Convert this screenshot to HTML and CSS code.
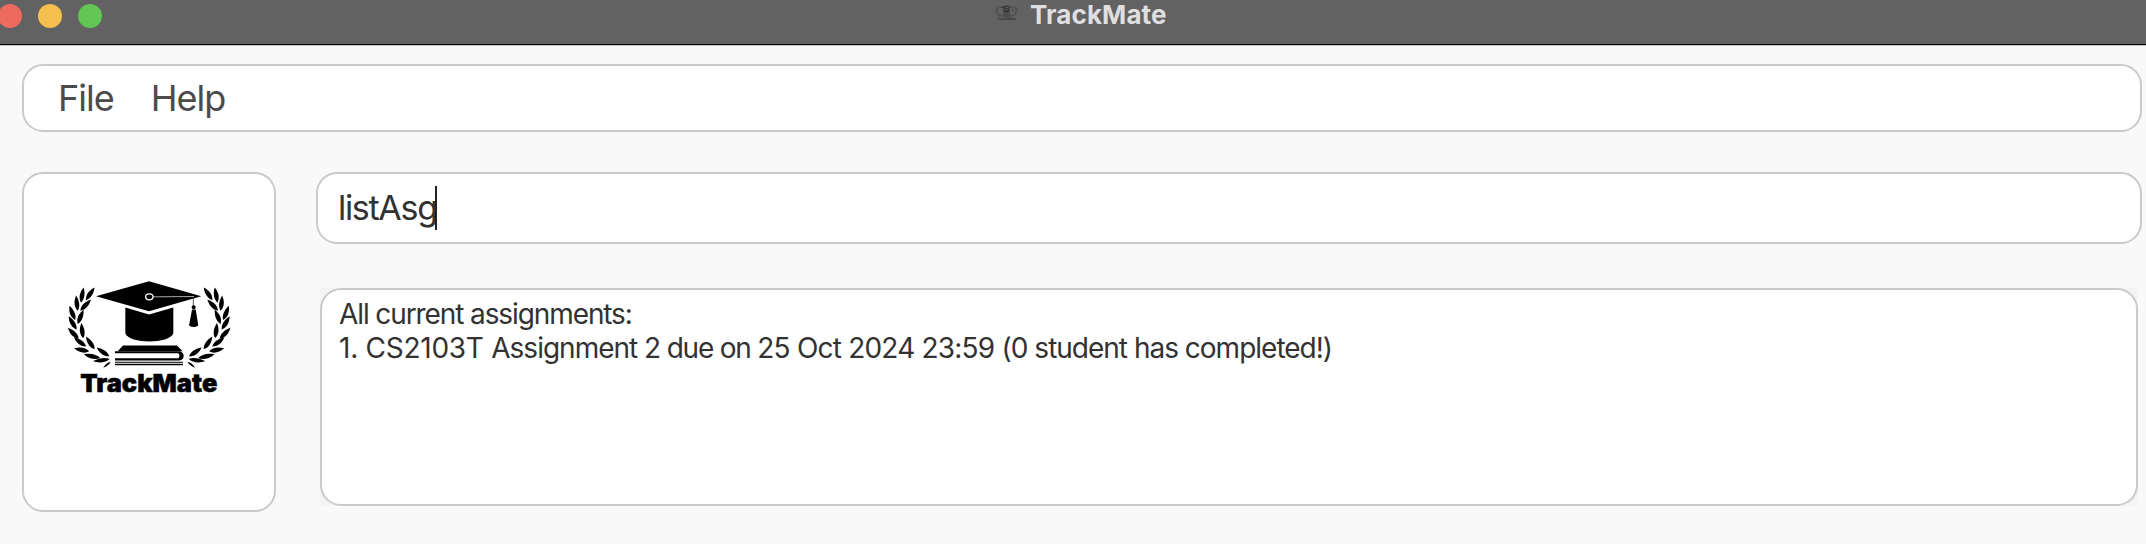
FILE: index.html
```html
<!DOCTYPE html>
<html lang="en">
<head>
<meta charset="utf-8">
<title>TrackMate</title>
<link rel="stylesheet" href="styles.css">
</head>
<body>
<svg class="defs" aria-hidden="true">
  <defs>
    <path id="leaf" d="M-23 0C-12 -9 4 -11 23 0C4 9 -12 8 -23 0Z"/>
    <g id="branch">
      <use href="#leaf" transform="translate(121 85) rotate(-56)"/>
      <use href="#leaf" transform="translate(97 89) rotate(-80)"/>
      <use href="#leaf" transform="translate(107 119) rotate(-46)"/>
      <use href="#leaf" transform="translate(81 113) rotate(-96)"/>
      <use href="#leaf" transform="translate(92 154) rotate(-68)"/>
      <use href="#leaf" transform="translate(67 142) rotate(-112)"/>
      <use href="#leaf" transform="translate(68 172) rotate(-121)"/>
      <use href="#leaf" transform="translate(97 195) rotate(-97)"/>
      <use href="#leaf" transform="translate(70 203) rotate(-135)"/>
      <use href="#leaf" transform="translate(121 232) rotate(-124)"/>
      <use href="#leaf" transform="translate(90 229) rotate(-143)"/>
      <use href="#leaf" transform="translate(159 259) rotate(-145)"/>
      <use href="#leaf" transform="translate(95 253) rotate(-169)"/>
      <use href="#leaf" transform="translate(126 272) rotate(-167) scale(1.1 1)"/>
      <use href="#leaf" transform="translate(154 284) rotate(172) scale(1.1 .9)"/>
      <path d="M160 307Q168 292 182 289Q178 300 160 307Z"/>
    </g>
    <g id="emblem">
      <use href="#branch"/>
      <use href="#branch" transform="translate(595 0) scale(-1 1)"/>
      <path d="M138 92L297 47L454 92L297 137Z"/>
      <path d="M226 126L297 147L370 126V203C360 236 236 236 226 203Z"/>
      <path d="M219 240H381L398 257H203Z"/>
      <path d="M195 257H389Q401 260 401 271Q401 284 388 285H195V278H385Q392 271 385 263H195Z"/>
      <path d="M195 289H399V292H195ZM195 295H399V299H195Z"/>
      <path d="M430 94V122" stroke="currentColor" stroke-width="2"/>
      <circle cx="431" cy="125" r="6"/>
      <path d="M426 132H437L445 180Q431 189 417 180Z"/>
      <ellipse class="cord" cx="298" cy="94" rx="11" ry="9"/>
      <path class="cord thin" d="M309 94L432 93"/>
    </g>
  </defs>
</svg>
<header class="titlebar">
  <div class="lights"><i class="light red"></i><i class="light amber"></i><i class="light green"></i></div>
  <div class="caption">
    <svg class="mini" viewBox="42 41 510 380"><use href="#emblem"/><text class="wordmark" x="91" y="380" textLength="410" lengthAdjust="spacingAndGlyphs">TrackMate</text></svg>
    <span>TrackMate</span>
  </div>
</header>
<main class="window">
  <nav class="menu box"><span>File</span><span>Help</span></nav>
  <div class="columns">
    <aside class="brand box">
      <svg class="logo" viewBox="42 41 510 380"><use href="#emblem"/><text class="wordmark heavy" x="91" y="379" textLength="411" lengthAdjust="spacingAndGlyphs">TrackMate</text></svg>
    </aside>
    <section class="content">
      <div class="command box"><span>listAsg</span><i class="caret"></i></div>
      <div class="result-pane"><div class="result box"><p class="heading">All current assignments:</p><p><span class="code">1. CS2103T </span><span class="word">Assignment </span><span class="due">2 due on </span>25 Oct 2024 23:59 (<span class="word">0 student has completed!)</span></p></div></div>
    </section>
  </div>
</main>
</body>
</html>
```
FILE: styles.css
```css
* { box-sizing: border-box; }
body { margin: 0; height: 544px; overflow: hidden; background: #f9f9f9; font-family: Inter, "Liberation Sans", sans-serif; }
.defs { display: block; width: 0; height: 0; }
.titlebar { height: 46px; background: #626262; border-bottom: 1px solid #c8c8c8; box-shadow: inset 0 -1px #000; display: grid; grid-template-columns: 994px 1fr; }
.lights { display: flex; gap: 16px; padding-top: 4px; margin-left: -2px; }
.light { width: 24px; height: 24px; border-radius: 50%; flex: none; }
.red { background: #ed6a5f; }
.amber { background: #f5bf50; }
.green { background: #62c655; }
.caption { display: flex; align-items: flex-start; gap: 12px; color: #e0dfe0; font-size: 26px; font-weight: 700; line-height: 30px; letter-spacing: 0.1px; }
.mini { width: 23px; height: 17px; margin-top: 5px; color: #3c3c3c; fill: #3c3c3c; margin-left: 1px; }
.mini .cord { stroke: #626262; }
.window { padding: 18px 4px 0 22px; }
.box { background: #fff; border: 2px solid #cacaca; border-radius: 21px; }
.menu { height: 68px; display: flex; align-items: center; gap: 37px; padding-left: 34px; color: #4b4b4b; font-size: 36px; letter-spacing: -1px; }
.columns { display: grid; grid-template-columns: 254px 1fr; gap: 40px; margin-top: 40px; }
.brand { height: 340px; display: flex; justify-content: center; padding-top: 105px; }
.logo { width: 170px; height: 127px; color: #000; }
.wordmark { font-size: 74px; font-weight: 900; }
.heavy { stroke: #000; stroke-width: 1.5; }
.cord { fill: none; stroke: #fff; stroke-width: 4; }
.thin { stroke-width: 2; }
.command { height: 72px; display: flex; align-items: center; padding: 0 0 2px 20px; font-size: 34px; color: #323232; letter-spacing: -1.3px; }
.caret { width: 2px; height: 44px; background: #222; margin: 2px 0 0 -2px; }
.result-pane { margin: 44px 4px 0; background: #f4f4f4; }
.result { height: 218px; padding: 7px 17px; color: #323232; font-size: 28px; line-height: 34px; letter-spacing: -0.8px; }
.result p { margin: 0; white-space: nowrap; }
.result .heading { letter-spacing: -1.1px; }
.code { letter-spacing: -0.26px; }
.word { letter-spacing: -1px; }
.due { letter-spacing: -1.2px; }
```
